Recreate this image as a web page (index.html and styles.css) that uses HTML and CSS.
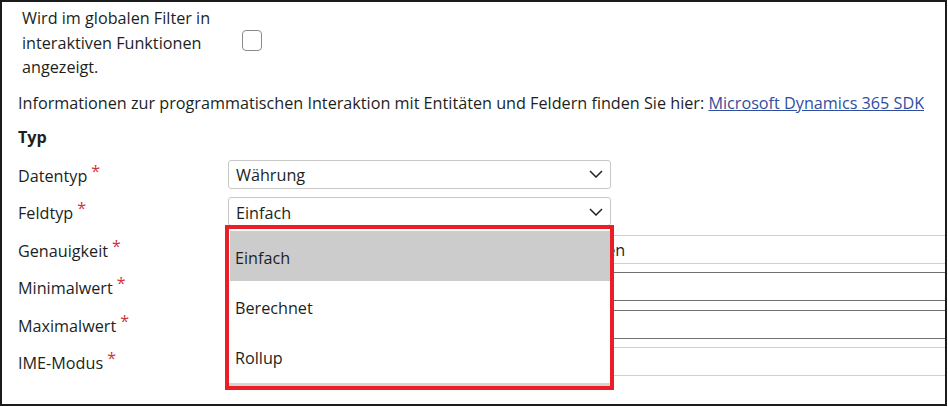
FILE: index.html
```html
<!DOCTYPE html>
<html lang="de">
<head>
<meta charset="utf-8">
<title>Feld</title>
<link rel="stylesheet" href="styles.css">
</head>
<body>
<div class="frame">
  <div class="filter-row">
    <div class="filter-label">Wird im globalen Filter in interaktiven Funktionen angezeigt.</div>
    <span class="checkbox"></span>
  </div>
  <p class="info">Informationen zur programmatischen Interaktion mit Entitäten und Feldern finden Sie hier: <a href="#" class="link">Microsoft Dynamics 365 SDK</a></p>
  <h3 class="section">Typ</h3>
  <div class="form-grid">
    <div class="label">Datentyp<span class="req">*</span></div>
    <div class="select">Währung<svg class="chev" viewBox="0 0 14 8" width="14" height="8"><path d="M1 1l6 6 6-6" fill="none" stroke="#222" stroke-width="1.5"/></svg></div>

    <div class="label">Feldtyp<span class="req">*</span></div>
    <div class="select">Einfach<svg class="chev" viewBox="0 0 14 8" width="14" height="8"><path d="M1 1l6 6 6-6" fill="none" stroke="#222" stroke-width="1.5"/></svg></div>

    <div class="label">Genauigkeit<span class="req">*</span></div>
    <div class="field light">Dezimalgenauigkeit der Preisgestaltung verwenden</div>

    <div class="label">Minimalwert<span class="req">*</span></div>
    <div class="field dark"></div>

    <div class="label">Maximalwert<span class="req">*</span></div>
    <div class="field dark"></div>

    <div class="label">IME-Modus<span class="req">*</span></div>
    <div class="field light"></div>
  </div>

  <div class="dropdown">
    <ul class="options">
      <li class="option selected">Einfach</li>
      <li class="option">Berechnet</li>
      <li class="option">Rollup</li>
    </ul>
  </div>
</div>
</body>
</html>
```

FILE: styles.css
```css
* { box-sizing: border-box; }
html, body { margin: 0; padding: 0; background: #fff; }
body {
  font-family: "Open Sans", "Noto Sans", sans-serif;
  font-size: 16.2px;
  color: #201f1e;
}
.frame {
  position: relative;
  width: 947px;
  height: 406px;
  border: 2px solid #1b1b1b;
  overflow: hidden;
  padding: 0 0 0 16px;
}
.filter-row {
  display: flex;
  align-items: center;
  padding: 4px 0 0 4px;
}
.filter-label {
  width: 220px;
  line-height: 24.5px;
}
.checkbox {
  width: 20px;
  height: 21px;
  border: 1px solid #8a8a8a;
  border-radius: 4px;
  margin-top: -5px;
}
.info {
  margin: 12px 0 0 0;
  line-height: 22px;
  white-space: nowrap;
}
.link { color: #2f4ea0; text-decoration: underline; }
.section {
  margin: 12px 0 0 0;
  font-size: 16.2px;
  font-weight: 700;
  line-height: 22px;
}
.form-grid {
  display: grid;
  grid-template-columns: 210px 1fr;
  grid-auto-rows: 29px;
  row-gap: 8.6px;
  margin-top: 12px;
}
.label {
  display: flex;
  align-items: center;
  line-height: 20px;
  padding-top: 3px;
}
.req {
  color: #d13438;
  font-size: 16px;
  position: relative;
  top: -5px;
  margin-left: 4px;
}
.select {
  width: 383px;
  border: 1px solid #c8c8c8;
  border-radius: 3px;
  display: flex;
  align-items: center;
  justify-content: space-between;
  padding: 2px 7px 0 7px;
}
.chev { display: block; margin-top: -2px; }
.field {
  width: 760px;
  display: flex;
  align-items: center;
  padding: 2px 7px 0 11px;
  white-space: nowrap;
}
.field.light { border-top: 1px solid #cfcfcf; border-bottom: 1px solid #cfcfcf; }
.field.dark { border-top: 1px solid #707070; border-bottom: 1px solid #707070; }
.dropdown {
  position: absolute;
  left: 223px;
  top: 223px;
  width: 389px;
  height: 165px;
  border: 4px solid #e81f27;
  background: #fff;
}
.options {
  list-style: none;
  margin: 0;
  padding: 2px 0 0 0;
  height: 100%;
  border-bottom: 3px solid #d4d4d4;
  box-shadow: inset 0 -4px 0 #fff;
}
.option {
  height: 50px;
  display: flex;
  align-items: center;
  padding: 3px 0 0 5px;
  margin-left: 1px;
}
.option.selected { background: #cccccc; }
```
